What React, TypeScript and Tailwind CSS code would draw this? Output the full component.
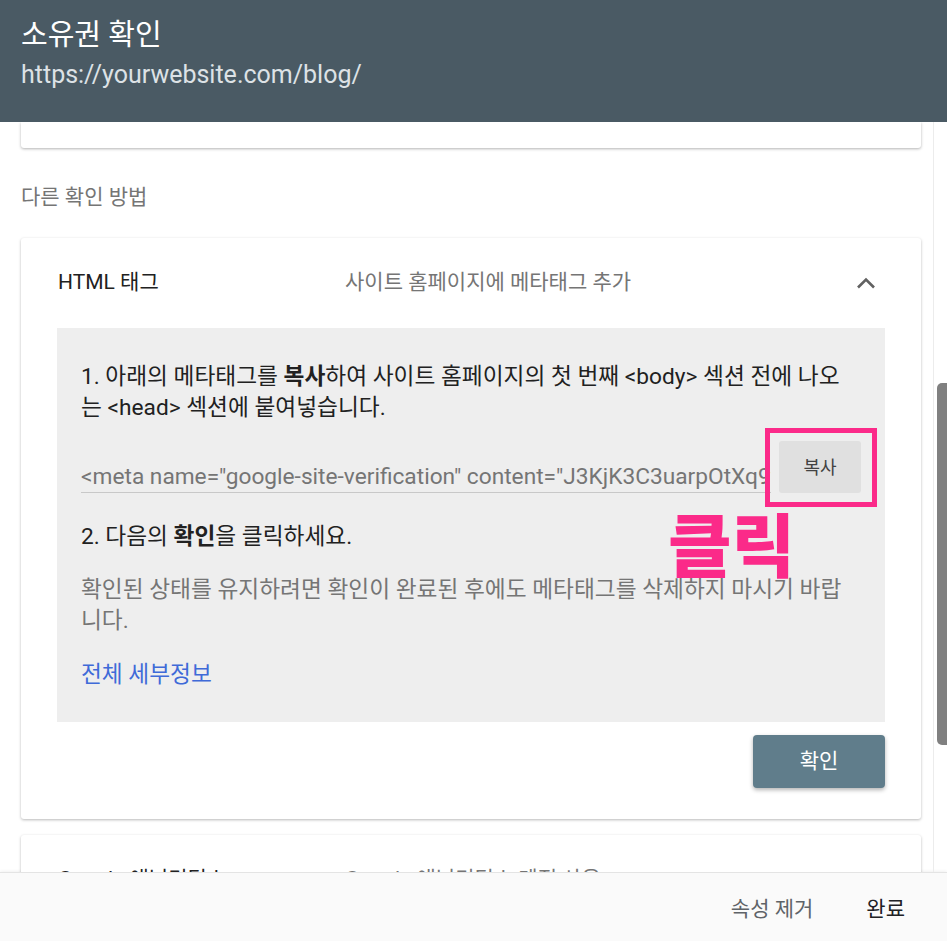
import React from "react";

const font = { fontFamily: "Roboto, 'Noto Sans CJK KR', sans-serif" };

const ChevronUp = () => (
  <svg width="20" height="12" viewBox="0 0 20 12" fill="none">
    <polyline points="2,10.5 10,2.5 18,10.5" stroke="#616161" strokeWidth="2.6" />
  </svg>
);

const VerifyCard = () => {
  return (
    <div className="bg-white rounded-[3px] shadow-[0_1px_3px_rgba(0,0,0,0.28)] flex flex-col pb-[31px]">
      <div className="h-[90px] px-[37px] flex items-center">
        <span className="w-[287px] text-[21px] text-[#212121]">HTML 태그</span>
        <span className="text-[21px] text-[#757575]">사이트 홈페이지에 메타태그 추가</span>
        <span className="ml-auto mr-[8px]">
          <ChevronUp />
        </span>
      </div>

      <div className="relative mx-[36px] bg-[#eeeeee] px-[24px] pt-[33px] pb-[32px] text-[22.7px] leading-[31px]">
        <p className="text-[#212121]">
          1. 아래의 메타태그를 <b className="font-bold">복사</b>하여 사이트 홈페이지의 첫 번째 &lt;body&gt; 섹션 전에 나오
          <br />는 &lt;head&gt; 섹션에 붙여넣습니다.
        </p>

        <div className="mt-[18px] flex items-end gap-[8px]">
          <div className="flex-1 overflow-hidden whitespace-nowrap border-b border-[#c8c8c8] text-[#757575] leading-[30px]">
            &lt;meta name="google-site-verification" content="J3KjK3C3uarpOtXq9vTe2LmWk7HdYbQ" /&gt;
          </div>
          <div className="relative">
            <button className="w-[82px] h-[52px] bg-[#e0e0e0] rounded-[3px] text-[18px] text-[#424242]">
              복사
            </button>
            <div className="absolute -left-[14px] -right-[16px] -top-[13px] -bottom-[14px] border-[5px] border-[#fb2a89]" />
          </div>
        </div>

        <p className="mt-[28px] text-[#212121]">
          2. 다음의 <b className="font-bold">확인</b>을 클릭하세요.
        </p>
        <p className="mt-[22px] text-[#757575]">
          확인된 상태를 유지하려면 확인이 완료된 후에도 메타태그를 삭제하지 마시기 바랍
          <br />니다.
        </p>
        <p className="mt-[23px] text-[#3f6ad8]">전체 세부정보</p>

        <span className="absolute left-[611px] top-[186px] text-[69px] leading-none font-black text-[#fb2a89]">
          클릭
        </span>
      </div>

      <button className="self-end mr-[36px] mt-[13px] w-[132px] h-[53px] rounded-[4px] bg-[#607d8b] text-white text-[21px] shadow-[0_2px_4px_rgba(0,0,0,0.3)]">
        확인
      </button>
    </div>
  );
};

export default function App() {
  return (
    <div className="w-[947px] h-[941px] flex flex-col overflow-hidden bg-white" style={font}>
      <header className="h-[122px] shrink-0 bg-[#4a5a64] px-[21px] pt-[16px]">
        <h1 className="text-[29px] leading-[38px] text-white">소유권 확인</h1>
        <p className="mt-[4px] text-[25px] leading-[33px] text-[#dde2e6]">https://yourwebsite.com/blog/</p>
      </header>

      <main className="relative flex-1 overflow-hidden">
        <div className="w-[900px] ml-[21px] flex flex-col">
          <div className="h-[26px] bg-white rounded-b-[3px] shadow-[0_1px_3px_rgba(0,0,0,0.3)]" />
          <p className="mt-[35px] text-[21px] leading-[28px] text-[#757575]">다른 확인 방법</p>
          <div className="mt-[27px]">
            <VerifyCard />
          </div>
          <div className="mt-[16px] bg-white rounded-[3px] shadow-[0_1px_3px_rgba(0,0,0,0.28)] h-[90px] px-[37px] flex items-center">
            <span className="w-[287px] text-[21px] text-[#212121]">Google 애널리틱스</span>
            <span className="text-[21px] text-[#757575]">Google 애널리틱스 계정 사용</span>
          </div>
        </div>

        <div className="absolute left-[933px] top-0 bottom-0 w-px bg-[#ececec]" />
        <div className="absolute left-[937px] top-[261px] w-[10px] h-[362px] rounded-l-[5px] bg-[#808080]" />
      </main>

      <footer className="h-[69px] shrink-0 bg-[#fafafa] border-t border-[#e4e4e4] shadow-[0_-1px_3px_rgba(0,0,0,0.06)] flex items-center justify-end gap-[53px] pr-[42px] pt-[6px] text-[21px]">
        <span className="text-[#5f6368]">속성 제거</span>
        <span className="text-[#202124]">완료</span>
      </footer>
    </div>
  );
}
